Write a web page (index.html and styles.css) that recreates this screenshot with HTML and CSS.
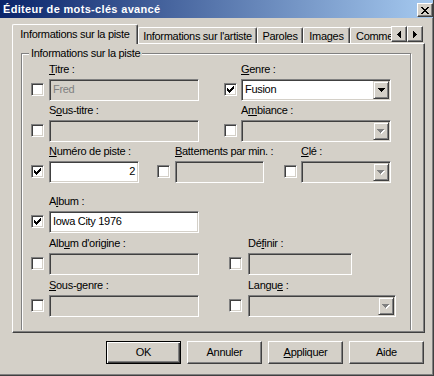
FILE: index.html
```html
<!DOCTYPE html>
<html lang="fr">
<head>
<meta charset="utf-8">
<title>Éditeur de mots-clés avancé</title>
<link rel="stylesheet" href="styles.css">
</head>
<body>
<div class="window">
  <div class="titlebar">
    <span class="title">Éditeur de mots-clés avancé</span>
    <span class="close"><svg width="8" height="7" viewBox="0 0 8 7" shape-rendering="crispEdges"><path d="M0 0h2v1H0zM6 0h2v1H6zM1 1h2v1H1zM5 1h2v1H5zM2 2h4v1H2zM3 3h2v1H3zM2 4h4v1H2zM1 5h2v1H1zM5 5h2v1H5zM0 6h2v1H0zM6 6h2v1H6z"/></svg></span>
  </div>

  <div class="tabstrip">
    <div class="tabs">
      <div class="tab sel t1">Informations sur la piste</div>
      <div class="tab t2">Informations sur l'artiste</div>
      <div class="tab t3">Paroles</div>
      <div class="tab t4">Images</div>
      <div class="tab t5">Commentaires</div>
    </div>
    <div class="arrows">
      <span class="abtn"><svg width="4" height="7" viewBox="0 0 4 7" shape-rendering="crispEdges"><path d="M3 0h1v7H3zM2 1h1v5H2zM1 2h1v3H1zM0 3h1v1H0z"/></svg></span>
      <span class="abtn"><svg width="4" height="7" viewBox="0 0 4 7" shape-rendering="crispEdges"><path d="M0 0h1v7H0zM1 1h1v5H1zM2 2h1v3H2zM3 3h1v1H3z"/></svg></span>
    </div>
  </div>

  <div class="panel">
    <div class="viewport">
      <div class="group">
        <div class="legend">Informations sur la piste</div>

        <div class="row r1">
          <div class="item ml9">
            <div class="lbl"><u>T</u>itre :</div>
            <span class="cb"></span>
            <div class="fld edit off w150 dim">Fred</div>
          </div>
          <div class="item ml25 gap4">
            <div class="lbl"><u>G</u>enre :</div>
            <span class="cb"><svg width="7" height="7" viewBox="0 0 7 7" shape-rendering="crispEdges"><path d="M0 2h1v3H0zM1 3h1v3H1zM2 4h1v3H2zM3 3h1v3H3zM4 2h1v3H4zM5 1h1v3H5zM6 0h1v3H6z"/></svg></span>
            <div class="fld combo w150"><span class="ctext">Fusion</span><span class="dd"><svg width="7" height="4" viewBox="0 0 7 4" shape-rendering="crispEdges"><path d="M0 0h7v1H0zM1 1h5v1H1zM2 2h3v1H2zM3 3h1v1H3z"/></svg></span></div>
          </div>
        </div>

        <div class="row r2">
          <div class="item ml9">
            <div class="lbl">S<u>o</u>us-titre :</div>
            <span class="cb"></span>
            <div class="fld edit off w150"></div>
          </div>
          <div class="item ml25 gap4">
            <div class="lbl">A<u>m</u>biance :</div>
            <span class="cb"></span>
            <div class="fld combo off w150"><span class="ctext"></span><span class="dd"><svg width="8" height="5" viewBox="0 0 8 5" shape-rendering="crispEdges"><path fill="#fff" d="M1 1h7v1H1zM2 2h5v1H2zM3 3h3v1H3zM4 4h1v1H4z"/><path fill="#808080" d="M0 0h7v1H0zM1 1h5v1H1zM2 2h3v1H2zM3 3h1v1H3z"/></svg></span></div>
          </div>
        </div>

        <div class="row r3">
          <div class="item ml9">
            <div class="lbl"><u>N</u>uméro de piste :</div>
            <span class="cb"><svg width="7" height="7" viewBox="0 0 7 7" shape-rendering="crispEdges"><path d="M0 2h1v3H0zM1 3h1v3H1zM2 4h1v3H2zM3 3h1v3H3zM4 2h1v3H4zM5 1h1v3H5zM6 0h1v3H6z"/></svg></span>
            <div class="fld edit w90 num">2</div>
          </div>
          <div class="item ml18">
            <div class="lbl"><u>B</u>attements par min. :</div>
            <span class="cb"></span>
            <div class="fld edit off w89"></div>
          </div>
          <div class="item ml20 gap4">
            <div class="lbl"><u>C</u>lé :</div>
            <span class="cb"></span>
            <div class="fld combo off w90"><span class="ctext"></span><span class="dd"><svg width="8" height="5" viewBox="0 0 8 5" shape-rendering="crispEdges"><path fill="#fff" d="M1 1h7v1H1zM2 2h5v1H2zM3 3h3v1H3zM4 4h1v1H4z"/><path fill="#808080" d="M0 0h7v1H0zM1 1h5v1H1zM2 2h3v1H2zM3 3h1v1H3z"/></svg></span></div>
          </div>
        </div>

        <div class="row r4">
          <div class="item ml9">
            <div class="lbl">A<u>l</u>bum :</div>
            <span class="cb"><svg width="7" height="7" viewBox="0 0 7 7" shape-rendering="crispEdges"><path d="M0 2h1v3H0zM1 3h1v3H1zM2 4h1v3H2zM3 3h1v3H3zM4 2h1v3H4zM5 1h1v3H5zM6 0h1v3H6z"/></svg></span>
            <div class="fld edit w150">Iowa City 1976</div>
          </div>
        </div>

        <div class="row r5">
          <div class="item ml9">
            <div class="lbl">Alb<u>u</u>m d'origine :</div>
            <span class="cb"></span>
            <div class="fld edit off w150"></div>
          </div>
          <div class="item ml30 gap6">
            <div class="lbl">Dé<u>f</u>inir :</div>
            <span class="cb"></span>
            <div class="fld edit off w104"></div>
          </div>
        </div>

        <div class="row r6">
          <div class="item ml9">
            <div class="lbl"><u>S</u>ous-genre :</div>
            <span class="cb"></span>
            <div class="fld edit off w150"></div>
          </div>
          <div class="item ml30 gap6">
            <div class="lbl">Langu<u>e</u> :</div>
            <span class="cb"></span>
            <div class="fld combo off w148"><span class="ctext"></span><span class="dd"><svg width="8" height="5" viewBox="0 0 8 5" shape-rendering="crispEdges"><path fill="#fff" d="M1 1h7v1H1zM2 2h5v1H2zM3 3h3v1H3zM4 4h1v1H4z"/><path fill="#808080" d="M0 0h7v1H0zM1 1h5v1H1zM2 2h3v1H2zM3 3h1v1H3z"/></svg></span></div>
          </div>
        </div>
      </div>
    </div>
  </div>

  <div class="buttons">
    <div class="btn def">OK</div>
    <div class="btn">Annuler</div>
    <div class="btn"><u>A</u>ppliquer</div>
    <div class="btn">Aide</div>
  </div>
</div>
</body>
</html>
```
FILE: styles.css
```css
* { box-sizing: border-box; }
html, body { margin: 0; padding: 0; }
body {
  background: #d4d0c8;
  font-family: "Liberation Sans", Arial, sans-serif;
  font-size: 11px;
  line-height: 13px;
  letter-spacing: -0.3px;
  color: #000;
}
u { text-decoration: underline; text-underline-offset: 1px; }

.window {
  width: 434px;
  height: 376px;
  background: #d4d0c8;
  border-right: 1px solid #404040;
  border-bottom: 1px solid #404040;
  box-shadow: inset -1px -1px #808080;
  overflow: hidden;
}

/* title bar */
.titlebar {
  height: 18px;
  display: flex;
  justify-content: space-between;
  align-items: flex-start;
  background: linear-gradient(to right, #0a246a, #a6caf0);
}
.title {
  color: #fff;
  font-weight: bold;
  line-height: 18px;
  letter-spacing: 0.33px;
  padding-left: 3px;
  white-space: nowrap;
}
.close {
  width: 16px;
  height: 14px;
  margin-top: 3px;
  display: flex;
  align-items: center;
  justify-content: center;
  background: #d4d0c8;
  border: 1px solid;
  border-color: #fff #404040 #404040 #fff;
  box-shadow: inset -1px -1px #808080;
}

/* tabs */
.tabstrip {
  display: flex;
  height: 20px;
  width: 413px;
  margin: 6px 0 0 12px;
  position: relative;
  z-index: 1;
}
.tabs {
  display: flex;
  align-items: flex-end;
  width: 379px;
  overflow: hidden;
}
.tab {
  flex: none;
  height: 16px;
  margin-bottom: 1px;
  padding-top: 2px;
  background: #d4d0c8;
  border-left: 1px solid #fff;
  border-top: 1px solid #fff;
  border-right: 1px solid #404040;
  box-shadow: inset -1px 0 #808080;
  border-radius: 2px 2px 0 0;
  text-align: center;
  white-space: nowrap;
}
.tab.sel { height: 20px; margin-bottom: 0; padding-top: 3px; }
.t1 { width: 126px; }
.t2 { width: 119px; }
.t3 { width: 46px; }
.t4 { width: 47px; }
.t5 { width: 70px; text-align: left; padding-left: 5px; }
.arrows { display: flex; height: 16px; margin-top: 2px; }
.abtn {
  width: 16px;
  height: 16px;
  display: flex;
  align-items: center;
  justify-content: center;
  background: #d4d0c8;
  border: 1px solid;
  border-color: #fff #404040 #404040 #fff;
  box-shadow: inset -1px -1px #808080;
}

/* panel */
.panel {
  width: 413px;
  height: 290px;
  margin: -1px 0 0 12px;
  border: 1px solid;
  border-color: #fff #404040 #404040 #fff;
  box-shadow: inset -1px -1px #808080;
}
.viewport { height: 286px; overflow: hidden; }

.group {
  width: 390px;
  height: 300px;
  margin: 9px 0 0 8px;
  border: 1px solid #808080;
  box-shadow: inset 1px 1px #fff, 1px 1px #fff;
}
.legend {
  width: max-content;
  margin: -7px 0 0 7px;
  padding: 0 2px;
  background: #d4d0c8;
  white-space: nowrap;
}

.row { display: flex; }
.r1, .r2, .r3 { margin-top: 3px; }
.r4 { margin-top: 12px; }
.r5, .r6 { margin-top: 4px; }

.item {
  display: grid;
  grid-template-columns: 13px auto;
  grid-template-rows: 13px 22px;
  row-gap: 3px;
  column-gap: 5px;
}
.gap4 { column-gap: 4px; }
.gap6 { column-gap: 6px; }
.ml9 { margin-left: 9px; }
.ml18 { margin-left: 18px; }
.ml20 { margin-left: 20px; }
.ml25 { margin-left: 25px; }
.ml30 { margin-left: 30px; }

.lbl {
  grid-column: 2;
  grid-row: 1;
  width: 0;
  white-space: nowrap;
}
.cb {
  grid-column: 1;
  grid-row: 2;
  width: 13px;
  height: 13px;
  margin-top: 4px;
  display: flex;
  align-items: center;
  justify-content: center;
  background: #fff;
  border: 1px solid;
  border-color: #808080 #fff #fff #808080;
  box-shadow: inset 1px 1px #404040, inset -1px -1px #d4d0c8;
}
.fld {
  grid-column: 2;
  grid-row: 2;
  height: 22px;
  background: #fff;
  border: 1px solid;
  border-color: #808080 #fff #fff #808080;
  box-shadow: inset 1px 1px #404040, inset -1px -1px #d4d0c8;
  line-height: 16px;
  white-space: nowrap;
  overflow: hidden;
}
.fld.off { background: #d4d0c8; }
.edit { padding: 1px 3px; }
.num { text-align: right; }
.dim { color: #808080; }
.w89 { width: 89px; }
.w90 { width: 90px; }
.w104 { width: 104px; }
.w148 { width: 148px; }
.w150 { width: 150px; }

.combo { display: flex; padding: 1px; }
.ctext { flex: 1; padding-left: 2px; }
.dd {
  flex: none;
  width: 16px;
  height: 18px;
  display: flex;
  align-items: center;
  justify-content: center;
  background: #d4d0c8;
  border: 1px solid;
  border-color: #d4d0c8 #404040 #404040 #d4d0c8;
  box-shadow: inset 1px 1px #fff, inset -1px -1px #808080;
}

/* buttons */
.buttons {
  display: flex;
  gap: 6px;
  padding-left: 106px;
  margin-top: 8px;
}
.btn {
  width: 75px;
  height: 23px;
  text-align: center;
  line-height: 21px;
  border: 1px solid;
  border-color: #fff #404040 #404040 #fff;
  box-shadow: inset -1px -1px #808080;
}
.btn.def {
  border-color: #000;
  box-shadow: inset 1px 1px #fff, inset -1px -1px #404040, inset -2px -2px #808080;
}
```
